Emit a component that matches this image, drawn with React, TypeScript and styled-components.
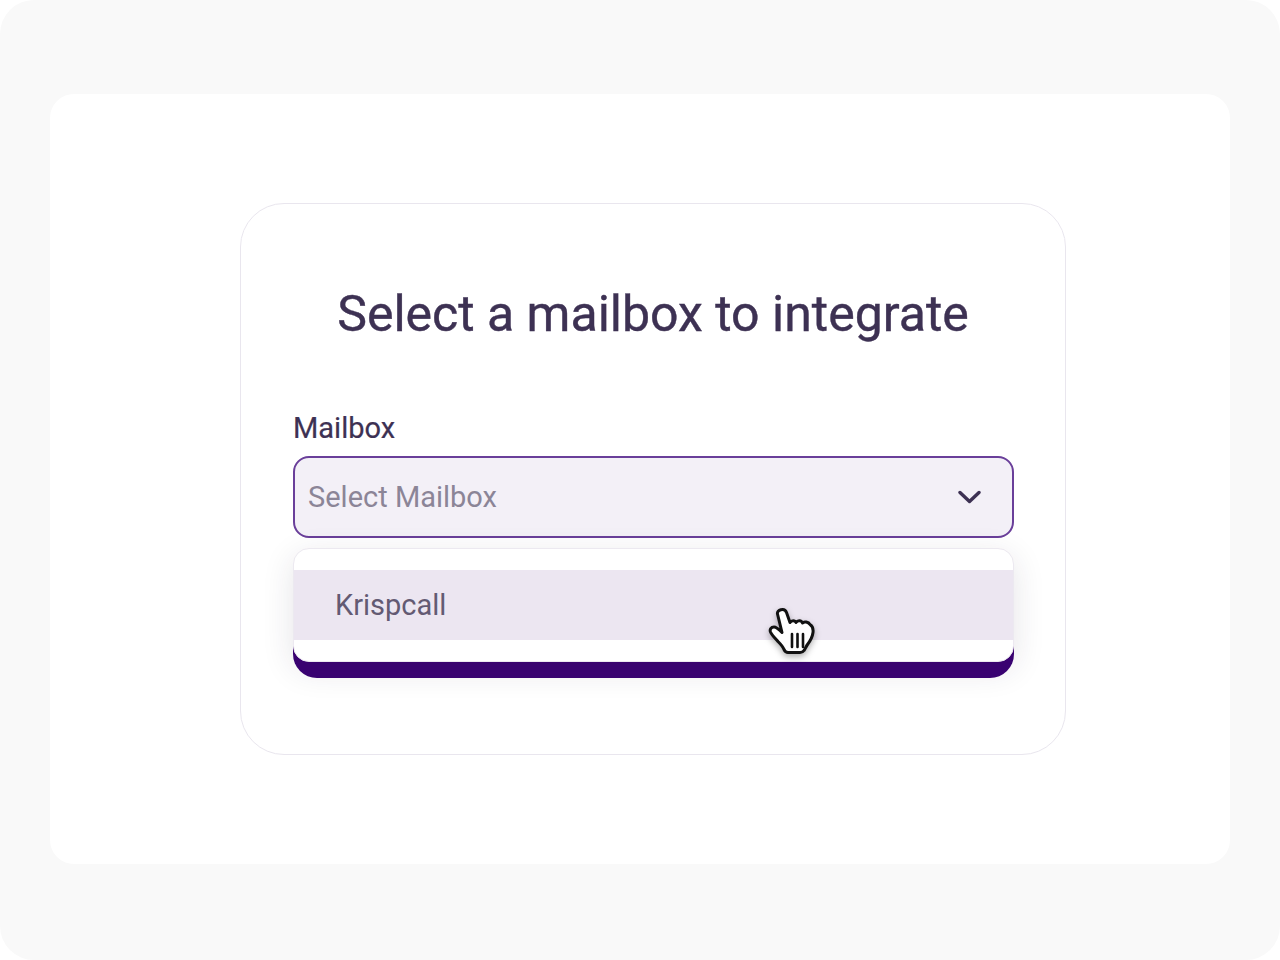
import styled, { createGlobalStyle } from "styled-components";

const GlobalStyle = createGlobalStyle`
  html, body {
    margin: 0;
    background: #ffffff;
  }
  body {
    font-family: Roboto, "Liberation Sans", sans-serif;
  }
`;

const Frame = styled.div`
  background: #f9f9f9;
  border-radius: 34px;
  box-sizing: border-box;
  height: 960px;
  overflow: hidden;
  padding: 94px 50px 96px;
  width: 1280px;
`;

const Panel = styled.div`
  background: #ffffff;
  border-radius: 24px;
  box-sizing: border-box;
  height: 770px;
  padding: 109px 165px 110px 190px;
`;

const Card = styled.div`
  border: 1px solid #e9e6ee;
  border-radius: 44px;
  box-sizing: border-box;
  height: 552px;
  padding: 78px 52px 0 52px;
  width: 826px;
`;

const Title = styled.h1`
  color: #3d3153;
  font-size: 50px;
  font-weight: 400;
  -webkit-text-stroke: 0.4px #3d3153;
  line-height: 64px;
  margin: 0 0 64px;
  text-align: center;
`;

const Form = styled.div`
  position: relative;
  width: 721px;
`;

const Label = styled.label`
  color: #3d3153;
  display: block;
  font-size: 29px;
  font-weight: 400;
  -webkit-text-stroke: 0.2px #3d3153;
  line-height: 36px;
  margin-bottom: 10px;
`;

const SelectBox = styled.div`
  align-items: center;
  background: #f3f0f7;
  border: 2px solid #6a3f9a;
  border-radius: 16px;
  box-sizing: border-box;
  color: #8b8597;
  display: flex;
  font-size: 29px;
  height: 82px;
  justify-content: space-between;
  padding: 0 31px 0 13px;
`;

const SubmitBar = styled.div`
  background: #3b0274;
  border-radius: 24px;
  height: 88px;
  margin-top: 52px;
`;

const Menu = styled.div`
  background: #ffffff;
  border: 1px solid #ece9f0;
  border-radius: 16px;
  box-shadow: 0 8px 32px rgba(40, 30, 60, 0.12);
  box-sizing: border-box;
  height: 114px;
  left: 0;
  overflow: hidden;
  padding: 21px 0;
  position: absolute;
  right: 0;
  top: 138px;
`;

const MenuItem = styled.div`
  align-items: center;
  background: #ece6f1;
  color: #635a73;
  display: flex;
  font-size: 29px;
  height: 70px;
  padding-left: 41px;
`;

const CursorWrap = styled.div`
  filter: drop-shadow(0 3px 3px rgba(0, 0, 0, 0.3));
  height: 52px;
  left: 475px;
  position: absolute;
  top: 196px;
  width: 48px;
`;

function Chevron() {
  return (
    <svg width="24" height="24" viewBox="0 0 24 24" fill="none">
      <path
        d="M3 7.500L12.500 16.500L22 7.500"
        stroke="#3d3153"
        strokeWidth="3.400"
        strokeLinecap="round"
        strokeLinejoin="round"
      />
    </svg>
  );
}

function HandCursor() {
  return (
    <svg width="48" height="52" viewBox="0 0 48 52" fill="none">
      <path
        d="M9.500 8c-1-4 7-7 9-1.500L22 16.500c1.500-2.500 5-2.500 6 0 1.500-2.500 5.500-2.500 6.500.5 1.500-2 6-1 7.500 1.500 2.500 1.500 3.500 4 3 8-.5 4-2.500 8-5.500 12-1.500 2-2 4-3.500 6-1 1.500-2 2-4 2H20c-2 0-3-1-4-3-1-3-3-5-6-8-2-2.500-6-6-7.500-9.500-1-2.500.5-5 3.500-5 2 0 4 1.500 8 5.500Z"
        fill="#ffffff"
        stroke="#111111"
        strokeWidth="3"
        strokeLinejoin="round"
      />
      <path
        d="M24 28V41M29.500 28V41M35 28V41"
        stroke="#111111"
        strokeWidth="2.600"
        strokeLinecap="round"
      />
    </svg>
  );
}

export default function App() {
  return (
    <>
      <GlobalStyle />
      <Frame>
        <Panel>
          <Card>
            <Title>Select a mailbox to integrate</Title>
            <Form>
              <Label>Mailbox</Label>
              <SelectBox>
                Select Mailbox
                <Chevron />
              </SelectBox>
              <SubmitBar />
              <Menu>
                <MenuItem>Krispcall</MenuItem>
              </Menu>
              <CursorWrap>
                <HandCursor />
              </CursorWrap>
            </Form>
          </Card>
        </Panel>
      </Frame>
    </>
  );
}
